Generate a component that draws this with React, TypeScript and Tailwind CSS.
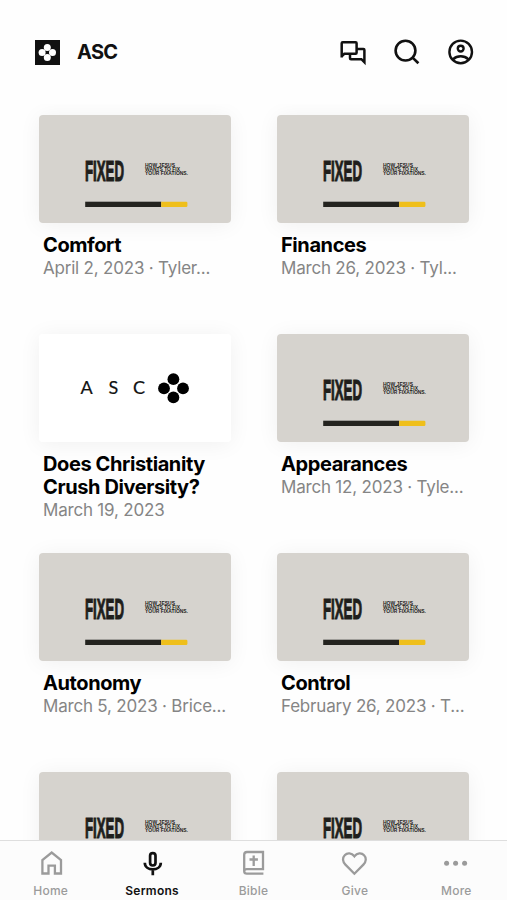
import type { ReactNode } from "react";
import clsx from "clsx";

type Sermon = {
  title: string;
  meta: string;
  art: "fixed" | "asc";
};

const sermons: Sermon[] = [
  { title: "Comfort", meta: "April 2, 2023 · Tyler...", art: "fixed" },
  { title: "Finances", meta: "March 26, 2023 · Tyl...", art: "fixed" },
  { title: "Does Christianity Crush Diversity?", meta: "March 19, 2023", art: "asc" },
  { title: "Appearances", meta: "March 12, 2023 · Tyle...", art: "fixed" },
  { title: "Autonomy", meta: "March 5, 2023 · Brice...", art: "fixed" },
  { title: "Control", meta: "February 26, 2023 · T...", art: "fixed" },
  { title: "", meta: "", art: "fixed" },
  { title: "", meta: "", art: "fixed" },
];

function FixedArt() {
  return (
    <svg viewBox="0 0 192 108" className="block h-full w-full bg-[#d6d3ce]">
      <g fill="#1f1e1b" fontFamily="'Liberation Sans', sans-serif" fontWeight="700">
        <text
          transform="translate(46 65.9) scale(0.5 1)"
          fontSize="30"
          textLength="78"
          lengthAdjust="spacingAndGlyphs"
          stroke="#1f1e1b"
          strokeWidth="1.2"
        >
          FIXED
        </text>
        <g fontSize="4.8">
          <text x="106" y="52.3" textLength="30" lengthAdjust="spacingAndGlyphs">HOW JESUS</text>
          <text x="106" y="56.2" textLength="35" lengthAdjust="spacingAndGlyphs">WANTS TO FIX</text>
          <text x="106" y="60.1" textLength="43" lengthAdjust="spacingAndGlyphs">YOUR FIXATIONS.</text>
        </g>
      </g>
      <rect x="46.2" y="86.7" width="76" height="5.3" fill="#24231f" />
      <path d="M122.2 86.7h25q1.2 0 1.2 1.2v2.9q0 1.2-1.2 1.2H122.2z" fill="#efbf1b" />
    </svg>
  );
}

function AscArt() {
  return (
    <svg viewBox="0 0 192 108" className="block h-full w-full bg-white">
      <g fill="#111" fontFamily="Lato, sans-serif" fontSize="18" stroke="#111" strokeWidth="0.2">
        <text x="41.5" y="60.2">A</text>
        <text x="69.5" y="60.2">S</text>
        <text x="94" y="60.2">C</text>
      </g>
      <circle cx="134.4" cy="45.2" r="5.9" />
      <circle cx="125" cy="54.4" r="5.9" />
      <circle cx="144" cy="54.4" r="5.9" />
      <circle cx="134.4" cy="63.4" r="5.9" />
    </svg>
  );
}

function SermonCard({ sermon }: { sermon: Sermon }) {
  return (
    <article className="h-[219px] w-48">
      <div className="h-[108px] overflow-hidden rounded-[4px] shadow-[0_2px_22px_rgba(0,0,0,0.06)]">
        {sermon.art === "fixed" ? <FixedArt /> : <AscArt />}
      </div>
      <div className="pt-[11px] pl-1">
        <h2 className="text-[20px] leading-[23px] font-[650] tracking-[-0.4px] text-black">{sermon.title}</h2>
        <p className="text-[17px] leading-[22px] tracking-[-0.2px] whitespace-nowrap text-[#858585]">{sermon.meta}</p>
      </div>
    </article>
  );
}

function Header() {
  return (
    <header className="flex h-[104px] items-center pr-[33px] pl-[35px]">
      <svg width="25" height="25" viewBox="0 0 25 25">
        <rect width="25" height="25" fill="#111" />
        <g fill="#fff">
          <circle cx="12.3" cy="7.4" r="3.5" />
          <circle cx="7.1" cy="12.5" r="3.5" />
          <circle cx="17.5" cy="12.5" r="3.5" />
          <circle cx="12.3" cy="17.6" r="3.5" />
        </g>
      </svg>
      <h1 className="ml-[17px] text-[20px] font-[650] tracking-[-0.7px] text-[#111]">ASC</h1>
      <div className="ml-auto flex items-center gap-[26px] text-[#111]">
        <svg width="28" height="28" viewBox="0 0 28 28" fill="none" stroke="currentColor" strokeWidth="2.5">
          <path d="M3.7 19.4V5.2Q3.7 4.2 4.7 4.2H17.6Q18.6 4.2 18.6 5.2V14.8Q18.6 15.8 17.6 15.8H6.3L3.7 18.3" />
          <path d="M18.6 10.9H25.4Q26.4 10.9 26.4 11.9V24.2L23.4 21.2H13Q12 21.2 12 20.2V15.8" />
        </svg>
        <svg width="28" height="28" viewBox="0 0 28 28" fill="none" stroke="currentColor" strokeWidth="2.6">
          <circle cx="13.5" cy="12.6" r="9.9" />
          <path d="m20.3 19.4 6.1 5.9" />
        </svg>
        <svg width="28" height="28" viewBox="0 0 28 28" fill="none" stroke="currentColor" strokeWidth="2.4">
          <circle cx="14.7" cy="13.9" r="11.3" />
          <circle cx="14.7" cy="10.6" r="2.9" />
          <path d="M7 21.3Q10.2 18.3 14.7 18.3T22.4 21.3" />
        </svg>
      </div>
    </header>
  );
}

function TabItem({ label, active, children }: { label: string; active?: boolean; children: ReactNode }) {
  return (
    <button className={clsx("flex flex-1 flex-col items-center pt-[8px]", active ? "text-[#111]" : "text-[#9b9b9b]")}>
      <svg width="28" height="28" viewBox="0 0 28 28" fill="none" stroke="currentColor" strokeWidth={active ? 2.7 : 2.3}>
        {children}
      </svg>
      <span className={clsx("mt-[6px] text-[12px] leading-4 tracking-[0.25px]", active ? "font-semibold" : "font-medium")}>
        {label}
      </span>
    </button>
  );
}

function TabBar() {
  return (
    <nav className="flex h-[60px] shrink-0 border-t border-[#dedede] bg-[#fcfcfc]">
      <TabItem label="Home">
        <path d="M5.4 24.5V11L14.7 3.5L24 11V24.5H17.9V16.7H11.5V24.5Z" />
      </TabItem>
      <TabItem label="Sermons" active>
        <rect x="12.1" y="4.1" width="5.4" height="12.4" rx="2.7" />
        <path d="M6.8 13.8C6.8 22.6 22.8 22.6 22.8 13.8M14.8 20.4V26.2" />
      </TabItem>
      <TabItem label="Bible">
        <path d="M23.4 24.7H6.9Q4.2 24.7 4.2 22.3V5.8Q4.2 3 7 3H23V20.1H6.8Q4.2 20.2 4.2 22.3M13.7 6.5V17M9.5 10.5H17.9" />
      </TabItem>
      <TabItem label="Give">
        <path d="M13.4 24.7L4.4 15.6C1.5 12.7 1.2 8.7 3.7 6.2C6.3 3.4 10.6 3.7 13.4 7.3C16.2 3.7 20.5 3.4 23.1 6.2C25.6 8.7 25.3 12.7 22.4 15.6Z" />
      </TabItem>
      <TabItem label="More">
        <g fill="currentColor" stroke="none">
          <circle cx="4.6" cy="14.2" r="2.5" />
          <circle cx="13.6" cy="14.2" r="2.5" />
          <circle cx="22.6" cy="14.2" r="2.5" />
        </g>
      </TabItem>
    </nav>
  );
}

export default function App() {
  return (
    <div className="flex h-[900px] w-[507px] flex-col overflow-hidden bg-[#fefefe] font-[Inter,sans-serif]">
      <Header />
      <main className="min-h-0 flex-1 overflow-hidden pt-[11px] pl-[39px]">
        <div className="grid grid-cols-[192px_192px] gap-x-[46px]">
          {sermons.map((sermon, i) => (
            <SermonCard key={i} sermon={sermon} />
          ))}
        </div>
      </main>
      <TabBar />
    </div>
  );
}
